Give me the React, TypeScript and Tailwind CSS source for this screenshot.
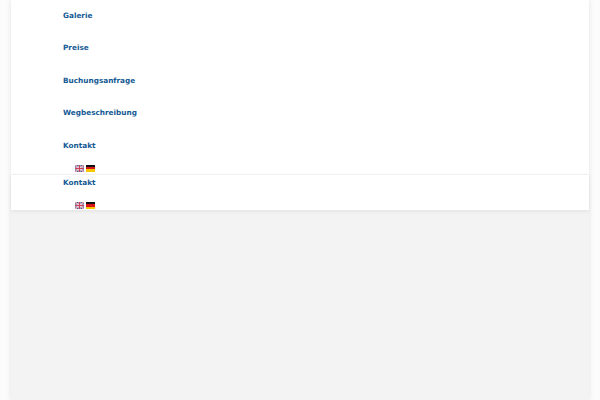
const items = ['Galerie', 'Preise', 'Buchungsanfrage', 'Wegbeschreibung', 'Kontakt']

function FlagGb() {
  return (
    <svg width="9" height="7" viewBox="0 0 18 14" className="block">
      <rect width="18" height="14" fill="#3d4a8a" />
      <path d="M0 0L18 14M18 0L0 14" stroke="#f4dfe4" strokeWidth="3" />
      <path d="M0 0L18 14M18 0L0 14" stroke="#c8405a" strokeWidth="1" />
      <path d="M9 0V14M0 7H18" stroke="#f4dfe4" strokeWidth="4" />
      <path d="M9 0V14M0 7H18" stroke="#c8405a" strokeWidth="2" />
    </svg>
  )
}

function FlagDe() {
  return (
    <div className="w-[9px] h-[7px] flex flex-col">
      <div className="flex-1 bg-[#111111]" />
      <div className="flex-1 bg-[#d8141c]" />
      <div className="flex-1 bg-[#f5c800]" />
    </div>
  )
}

function Flags() {
  return (
    <div className="flex items-center gap-[2px] pl-[12px] h-[7px]">
      <FlagGb />
      <FlagDe />
    </div>
  )
}

function NavLink({ label }: { label: string }) {
  return (
    <a className="block text-[7.3px] leading-[12px] font-bold text-[#155a94]">{label}</a>
  )
}

export default function App() {
  return (
    <div className="h-[400px] overflow-hidden bg-[#fbfbfb] px-[11px] font-['DejaVu_Sans',sans-serif]">
      <div className="h-full bg-[#f3f3f3] shadow-[0_0_5px_rgba(0,0,0,0.1)]">
        <div className="h-[175px] bg-white border-b border-[#f4f4f4] pl-[52px] pt-[10px]">
          <div className="flex flex-col gap-[20.4px]">
            {items.map((item) => (
              <NavLink key={item} label={item} />
            ))}
          </div>
          <div className="pt-[13px]">
            <Flags />
          </div>
        </div>
        <div className="h-[35px] bg-white pl-[52px] pt-[2px] shadow-[0_1px_4px_rgba(0,0,0,0.08)]">
          <NavLink label="Kontakt" />
          <div className="pt-[13px]">
            <Flags />
          </div>
        </div>
      </div>
    </div>
  )
}
